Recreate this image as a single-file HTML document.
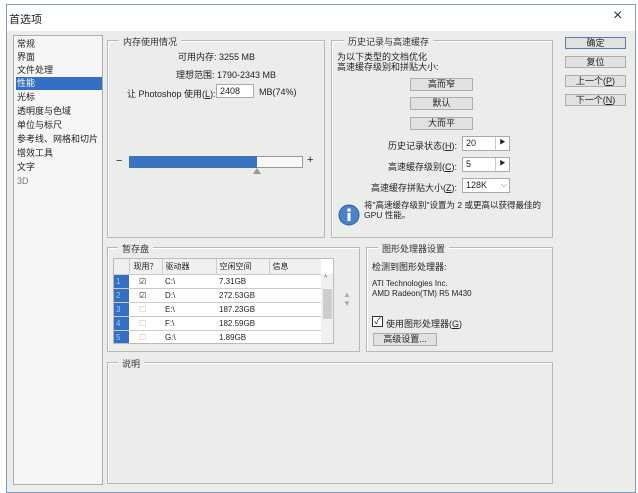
<!DOCTYPE html>
<html><head><meta charset="utf-8"><style>
*{box-sizing:border-box;margin:0;padding:0}
body{width:638px;height:493px;background:#fff;font-family:"Liberation Sans","Noto Sans CJK SC",sans-serif;font-size:9px;color:#222;position:relative;overflow:hidden}
.a{position:absolute}
.win{left:6px;top:4px;width:630px;height:489px;border:1px solid #7f9db9;background:#ececea}
.tb{left:7px;top:5px;width:628px;height:26px;background:#fff}
.grp{position:absolute;border:1px solid #b8b8b8;box-shadow:inset 1px 1px 0 #fff}
.lg{position:absolute;background:#ececea;padding:0 4px;top:-6px;font-size:9px;color:#333}
.btn{position:absolute;background:#e1e1e1;border:1px solid #adadad;text-align:center;font-size:9px;line-height:11px}
.inp{position:absolute;background:#fff;border:1px solid #aaa;font-size:9px;line-height:12px;padding-left:3px}
.r{position:absolute;text-align:right;font-size:9px}
.li{position:absolute;left:2px;font-size:9px;line-height:13px;width:86px;padding-left:1px}
table{border-collapse:collapse}
</style></head><body>
<div class="a win"></div>
<div class="a tb"></div>
<div class="a" style="left:9px;top:11px;font-size:11px">首选项</div>
<div class="a" style="left:613px;top:7px;font-size:16px;color:#333">×</div>

<div class="a" style="left:13px;top:35px;width:90px;height:450px;background:#f6f6f6;border:1px solid #adadad">
<div class="li" style="top:2px">常规</div>
<div class="li" style="top:15px">界面</div>
<div class="li" style="top:28px">文件处理</div>
<div class="li" style="top:41px;background:#3370c4;color:#fff;width:86px">性能</div>
<div class="li" style="top:55px">光标</div>
<div class="li" style="top:69px">透明度与色域</div>
<div class="li" style="top:83px">单位与标尺</div>
<div class="li" style="top:97px">参考线、网格和切片</div>
<div class="li" style="top:111px">增效工具</div>
<div class="li" style="top:125px">文字</div>
<div class="li" style="top:139px;color:#777">3D</div>
</div>

<div class="grp" style="left:107px;top:40px;width:218px;height:198px">
<div class="lg" style="left:11px">内存使用情况</div>
</div>
<div class="r" style="left:150px;top:50px;width:105px">可用内存: 3255 MB</div>
<div class="a" style="left:176px;top:68px">理想范围: 1790-2343 MB</div>
<div class="a" style="left:127px;top:87px">让 Photoshop 使用(<u>L</u>):</div>
<div class="inp" style="left:216px;top:84px;width:38px;height:14px">2408</div>
<div class="a" style="left:259px;top:87px">MB(74%)</div>
<div class="a" style="left:116px;top:155px;font-size:11px">−</div>
<div class="a" style="left:129px;top:156px;width:174px;height:12px;background:#f8f8f8;border:1px solid #999"></div>
<div class="a" style="left:129px;top:156px;width:128px;height:12px;background:#3b73c0"></div>
<div class="a" style="left:253px;top:168px;width:0;height:0;border-left:4px solid transparent;border-right:4px solid transparent;border-bottom:6px solid #999"></div>
<div class="a" style="left:307px;top:154px;font-size:11px">+</div>

<div class="grp" style="left:331px;top:40px;width:222px;height:198px">
<div class="lg" style="left:12px">历史记录与高速缓存</div>
</div>
<div class="a" style="left:337px;top:52px;line-height:10px">为以下类型的文档优化<br>高速缓存级别和拼贴大小:</div>
<div class="btn" style="left:410px;top:78px;width:63px;height:13px">高而窄</div>
<div class="btn" style="left:410px;top:97px;width:63px;height:13px">默认</div>
<div class="btn" style="left:410px;top:117px;width:63px;height:13px">大而平</div>
<div class="r" style="left:350px;top:139px;width:107px">历史记录状态(<u>H</u>):</div>
<div class="inp" style="left:462px;top:136px;width:48px;height:15px">20<span style="position:absolute;right:0;top:0;width:14px;height:13px;border-left:1px solid #ccc;font-size:6px;text-align:center">▶</span></div>
<div class="r" style="left:350px;top:160px;width:107px">高速缓存级别(<u>C</u>):</div>
<div class="inp" style="left:462px;top:157px;width:48px;height:15px">5<span style="position:absolute;right:0;top:0;width:14px;height:13px;border-left:1px solid #ccc;font-size:6px;text-align:center">▶</span></div>
<div class="r" style="left:350px;top:181px;width:107px">高速缓存拼贴大小(<u>Z</u>):</div>
<div class="inp" style="left:462px;top:178px;width:48px;height:15px">128K<span style="position:absolute;right:2px;top:0;font-size:8px;color:#666">⌵</span></div>
<svg class="a" style="left:338px;top:204px" width="22" height="22"><circle cx="11" cy="11" r="10" fill="#4a84c8" stroke="#2a5d9a"/><circle cx="11" cy="6" r="1.8" fill="#fff"/><rect x="9.5" y="9" width="3" height="8" fill="#fff"/></svg>
<div class="a" style="left:364px;top:200px;line-height:10px;font-size:8.5px">将"高速缓存级别"设置为 2 或更高以获得最佳的<br>GPU 性能。</div>

<div class="btn" style="left:565px;top:37px;width:61px;height:12px;border:1px solid #5a7db5">确定</div>
<div class="btn" style="left:565px;top:56px;width:61px;height:12px">复位</div>
<div class="btn" style="left:565px;top:75px;width:61px;height:12px">上一个(<u>P</u>)</div>
<div class="btn" style="left:565px;top:94px;width:61px;height:12px">下一个(<u>N</u>)</div>

<div class="grp" style="left:107px;top:247px;width:253px;height:105px">
<div class="lg" style="left:10px">暂存盘</div>
</div>
<div class="a" style="left:113px;top:258px;width:221px;height:86px;background:#fff;border:1px solid #bbb;overflow:hidden">
<table style="font-size:8px;width:207px">
<tr style="height:15px;background:#f0f0f0"><td style="width:15px;border-right:1px solid #ccc"></td><td style="width:33px;border-right:1px solid #ccc;padding-left:4px">现用？</td><td style="width:54px;border-right:1px solid #ccc;padding-left:3px">驱动器</td><td style="width:53px;border-right:1px solid #ccc;padding-left:3px">空闲空间</td><td style="padding-left:3px">信息</td></tr>
<tr style="height:14px;border-top:1px solid #ccc"><td style="background:#3370c4;color:#9cf;padding-left:2px">1</td><td style="padding-left:10px">☑</td><td style="padding-left:3px">C:\</td><td style="padding-left:3px">7.31GB</td><td></td></tr>
<tr style="height:14px;border-top:1px solid #ccc"><td style="background:#3370c4;color:#9cf;padding-left:2px">2</td><td style="padding-left:10px">☑</td><td style="padding-left:3px">D:\</td><td style="padding-left:3px">272.53GB</td><td></td></tr>
<tr style="height:14px;border-top:1px solid #ccc"><td style="background:#3370c4;color:#9cf;padding-left:2px">3</td><td style="padding-left:10px;color:#bbb">☐</td><td style="padding-left:3px">E:\</td><td style="padding-left:3px">187.23GB</td><td></td></tr>
<tr style="height:14px;border-top:1px solid #ccc"><td style="background:#3370c4;color:#9cf;padding-left:2px">4</td><td style="padding-left:10px;color:#bbb">☐</td><td style="padding-left:3px">F:\</td><td style="padding-left:3px">182.59GB</td><td></td></tr>
<tr style="height:14px;border-top:1px solid #ccc"><td style="background:#3370c4;color:#9cf;padding-left:2px">5</td><td style="padding-left:10px;color:#bbb">☐</td><td style="padding-left:3px">G:\</td><td style="padding-left:3px">1.89GB</td><td></td></tr>
</table>
<div class="a" style="left:207px;top:15px;width:13px;height:70px;background:#f0f0f0"></div>
<div class="a" style="left:209px;top:30px;width:9px;height:30px;background:#cdcdcd"></div>
<div class="a" style="left:210px;top:16px;font-size:7px;color:#555">^</div>
</div>
<div class="a" style="left:343px;top:290px;font-size:8px;color:#aaa;line-height:9px">▲<br>▼</div>

<div class="grp" style="left:366px;top:247px;width:187px;height:105px">
<div class="lg" style="left:11px">图形处理器设置</div>
</div>
<div class="a" style="left:372px;top:260px">检测到图形处理器:</div>
<div class="a" style="left:372px;top:279px;font-size:8px;line-height:10px">ATI Technologies Inc.<br>AMD Radeon(TM) R5 M430</div>
<div class="a" style="left:372px;top:316px;width:11px;height:11px;border:1px solid #333;background:#fff;font-size:9px;line-height:9px;text-align:center">✓</div>
<div class="a" style="left:386px;top:317px">使用图形处理器(<u>G</u>)</div>
<div class="btn" style="left:373px;top:333px;width:64px;height:13px">高级设置...</div>

<div class="grp" style="left:107px;top:362px;width:446px;height:122px">
<div class="lg" style="left:10px">说明</div>
</div>
</body></html>
